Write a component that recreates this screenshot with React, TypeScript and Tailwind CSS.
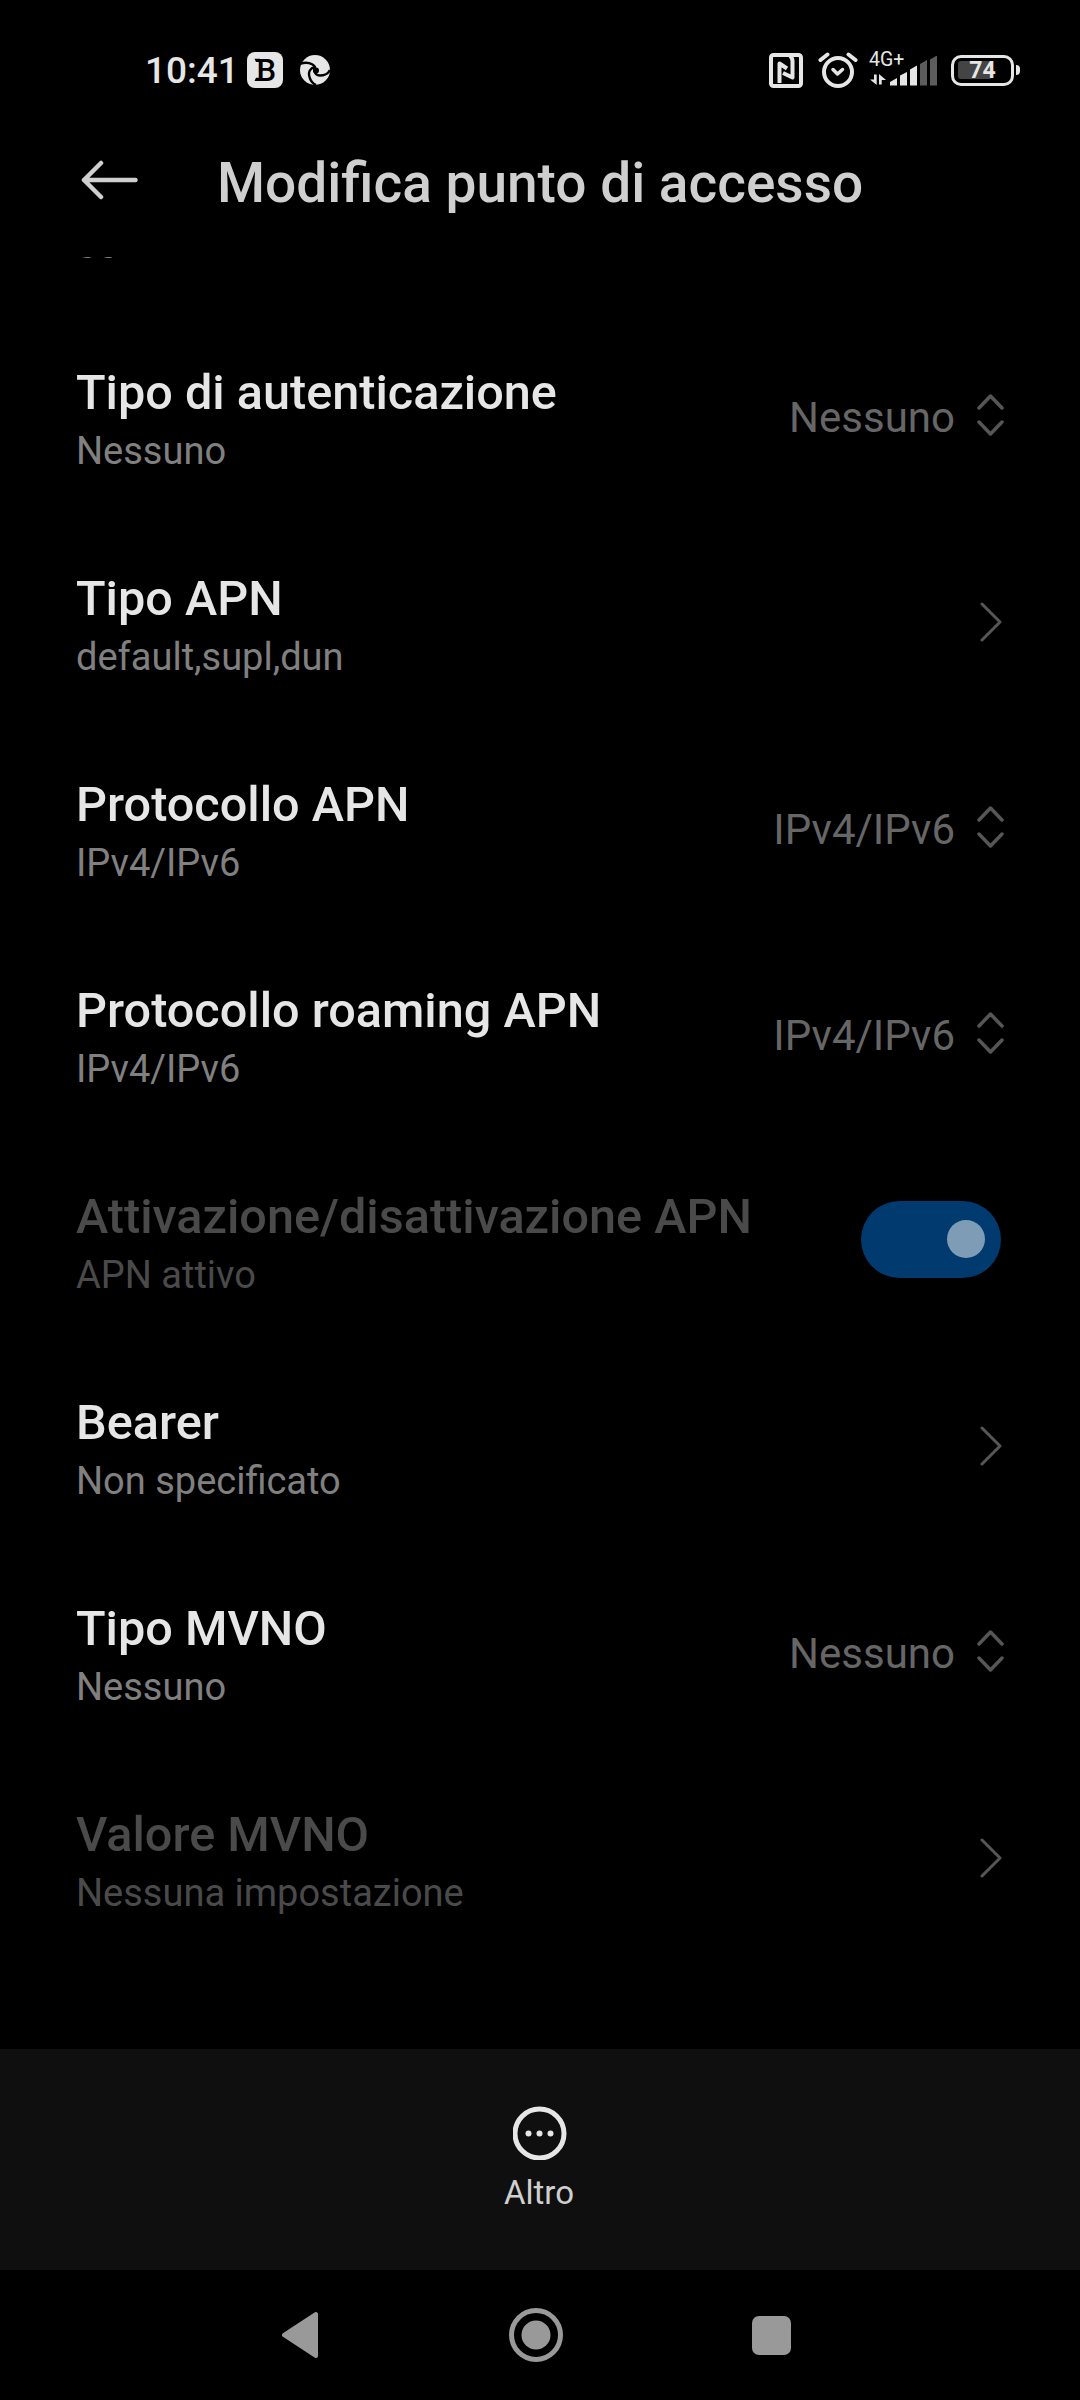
import clsx from "clsx";

type Control = "select" | "link" | "switch" | "none";

interface Setting {
    label: string;
    summary: string;
    control: Control;
    value?: string;
    disabled?: boolean;
}

const settings: Setting[] = [
    { label: "MNC", summary: "50", control: "none" },
    { label: "Tipo di autenticazione", summary: "Nessuno", control: "select", value: "Nessuno" },
    { label: "Tipo APN", summary: "default,supl,dun", control: "link" },
    { label: "Protocollo APN", summary: "IPv4/IPv6", control: "select", value: "IPv4/IPv6" },
    { label: "Protocollo roaming APN", summary: "IPv4/IPv6", control: "select", value: "IPv4/IPv6" },
    { label: "Attivazione/disattivazione APN", summary: "APN attivo", control: "switch", disabled: true },
    { label: "Bearer", summary: "Non specificato", control: "link" },
    { label: "Tipo MVNO", summary: "Nessuno", control: "select", value: "Nessuno" },
    { label: "Valore MVNO", summary: "Nessuna impostazione", control: "link", disabled: true },
];

function BadgeIcon() {
    return (
        <svg className="size-9" viewBox="0 0 36 36">
            <rect width="36" height="36" rx="8" fill="#e6e6e6" />
            <text x="9.500" y="29" fontSize="31" fontWeight="500" fill="#000">B</text>
            <path d="M7.500 6.700H13V10H9zM7.500 29H13V25.700H9z" fill="#000" />
        </svg>
    );
}

function NfcIcon() {
    return (
        <svg className="h-[35px] w-[34px]" viewBox="0 0 34 35" fill="none" stroke="#e6e6e6" strokeWidth="4" strokeLinejoin="round">
            <rect x="2" y="2" width="30" height="31" rx="2.500" />
            <path d="M10.500 30V10.500L18 15.500" />
            <path d="M14 20L23.500 24.500V8Q23.500 5 21 3" />
        </svg>
    );
}

function AlarmIcon() {
    return (
        <svg className="h-[36px] w-[40px]" viewBox="0 0 40 36" fill="none" stroke="#e6e6e6" strokeWidth="4" strokeLinecap="round" strokeLinejoin="round">
            <circle cx="20" cy="20" r="14" />
            <path d="M15 17.500L19.500 22L24.500 17.500" strokeWidth="3.500" />
            <path d="M2.500 8L9.500 2.500M37.500 8L30.500 2.500" />
        </svg>
    );
}

function SwirlIcon() {
    return (
        <svg className="h-[30px] w-[30px]" viewBox="0 0 30 30">
            <circle cx="15" cy="15" r="15" fill="#e6e6e6" />
            <g fill="none" stroke="#000" strokeWidth="2.400">
                <path d="M0 9C6 6.500 13 8 15 12C13 17 16 20.500 20 20.500C25 20.500 28.500 18 30 15" />
                <path d="M15 12C10 13 8 17 9.500 22C10.500 26 13 28.500 16 30" />
            </g>
            <circle cx="16" cy="15.500" r="3" fill="#000" />
        </svg>
    );
}

function SignalIcon() {
    return (
        <svg className="h-[32px] w-[68px]" viewBox="0 0 68 32">
            <g fill="#e6e6e6">
                <path d="M4 18.500h2.700v10.500L0 23.500h4zM9 28.500V18l7 6h-4.300v4.500z" />
                <path d="M20 29.500V26l7-4v7.500zM30 29.500V19.500l7-3.500v13.500zM40 29.500V13.500l7-4v20z" />
            </g>
            <path fill="#5c5c5c" d="M50 29.500V8l7-4v25.500zM60 29.500V3.500l7-4v30z" />
        </svg>
    );
}

function StatusBar() {
    return (
        <header className="flex h-[136px] items-start justify-between pl-[145px] pr-[60px] pt-[52px] text-[#e6e6e6]">
            <div className="flex h-9 items-center">
                <span className="w-[102px] pt-[2px] text-[37px] font-medium leading-9">10:41</span>
                <BadgeIcon />
                <span className="ml-[17px]"><SwirlIcon /></span>
            </div>
            <div className="flex h-9 items-center">
                <NfcIcon />
                <span className="ml-[15px]"><AlarmIcon /></span>
                <div className="relative ml-[12px] flex h-9 items-end">
                    <SignalIcon />
                    <span className="absolute -top-[2px] -left-[1px] text-[19.5px] leading-5">4G+</span>
                </div>
                <div className="ml-[13px] flex items-center gap-[2px]">
                    <div className="relative flex h-[31px] w-[63px] items-center rounded-[10px] border-[3px] border-[#e6e6e6] px-[4px]">
                        <span className="h-[18px] w-[34px] rounded-[3px] bg-[#444]" />
                        <span className="absolute inset-0 flex items-center justify-center text-[23px] font-bold leading-none">74</span>
                    </div>
                    <span className="h-[10px] w-[4px] rounded-r-sm bg-[#e6e6e6]" />
                </div>
            </div>
        </header>
    );
}

function TitleBar() {
    return (
        <div className="flex h-[121px] shrink-0 items-start pl-[80px] text-[#cfcfcf]">
            <svg className="mt-[24px] h-[40px] w-[60px]" viewBox="0 0 60 40" fill="none" stroke="currentColor" strokeWidth="4.500" strokeLinecap="round" strokeLinejoin="round">
                <path d="M55.500 20H4M21 3L4 20L21 37" />
            </svg>
            <h1 className="ml-[77px] mt-[14px] text-[55px] font-medium leading-[66px]">Modifica punto di accesso</h1>
        </div>
    );
}

function Toggle() {
    return (
        <span className="mr-[3px] flex h-[77px] w-[140px] items-center justify-end rounded-full bg-[#003a6e] pr-[16px]">
            <span className="size-[38px] rounded-full bg-[#7f9cb6]" />
        </span>
    );
}

function SettingRow({ label, summary, control, value, disabled }: Setting) {
    return (
        <li className="flex h-[206px] items-center justify-between px-[76px]">
            <div className="pt-2">
                <div className={clsx("text-[48.6px] font-medium leading-[64px]", disabled ? "text-[#4a4a4a]" : "text-[#e6e6e6]")}>{label}</div>
                <div className={clsx("text-[38px] leading-[53px]", disabled ? "text-[#4a4a4a]" : "text-[#808080]")}>{summary}</div>
            </div>
            {control === "select" && (
                <div className="flex items-center gap-[22px]">
                    <span className="pt-[6px] text-[42px] leading-[50px] text-[#666]">{value}</span>
                    <svg className="h-[44px] w-[27px]" viewBox="0 0 27 44" fill="none" stroke="#565656" strokeWidth="3.500" strokeLinecap="round" strokeLinejoin="round">
                        <path d="M2 15L13.500 3L25 15M2 29L13.500 41L25 29" />
                    </svg>
                </div>
            )}
            {control === "link" && (
                <svg className="mr-[2px] mt-[2px] h-[40px] w-[22px]" viewBox="0 0 22 40" fill="none" stroke="#565656" strokeWidth="3" strokeLinecap="round" strokeLinejoin="round">
                    <path d="M2 2L20 20L2 38" />
                </svg>
            )}
            {control === "switch" && <Toggle />}
        </li>
    );
}

function ActionBar() {
    return (
        <div className="flex h-[221px] shrink-0 flex-col items-center bg-[#0f0f0f] pt-[57px]">
            <svg className="size-[54px]" viewBox="0 0 54 54" fill="#e6e6e6">
                <circle cx="26.500" cy="27.500" r="24.500" fill="none" stroke="#e6e6e6" strokeWidth="5" />
                <circle cx="15.500" cy="27.500" r="3" />
                <circle cx="26.500" cy="27.500" r="3" />
                <circle cx="37.500" cy="27.500" r="3" />
            </svg>
            <span className="mr-[2px] mt-[13px] text-[33px] leading-[40px] text-[#cfcfcf]">Altro</span>
        </div>
    );
}

function NavigationBar() {
    return (
        <nav className="flex h-[130px] shrink-0 items-center pl-[282px]">
            <svg className="h-[48px] w-[37px]" viewBox="0 0 37 48" fill="#999" stroke="#999" strokeWidth="4" strokeLinejoin="round">
                <path d="M34 3V45L2 24z" />
            </svg>
            <svg className="ml-[190px] size-[54px]" viewBox="0 0 54 54" fill="#999">
                <circle cx="27" cy="27" r="24.500" fill="none" stroke="#999" strokeWidth="5" />
                <circle cx="27" cy="27" r="14.500" />
            </svg>
            <span className="ml-[189px] size-[39px] rounded-[7px] bg-[#999]" />
        </nav>
    );
}

export default function App() {
    return (
        <div className="flex h-[2400px] w-[1080px] flex-col overflow-hidden bg-black font-[Roboto,sans-serif]">
            <StatusBar />
            <TitleBar />
            {/* scrolled list, the first row is almost fully out of view */}
            <div className="min-h-0 flex-1 overflow-hidden">
                <ul className="-mt-[151px]">
                    {settings.map((setting) => (
                        <SettingRow key={setting.label} {...setting} />
                    ))}
                </ul>
            </div>
            <ActionBar />
            <NavigationBar />
        </div>
    );
}
